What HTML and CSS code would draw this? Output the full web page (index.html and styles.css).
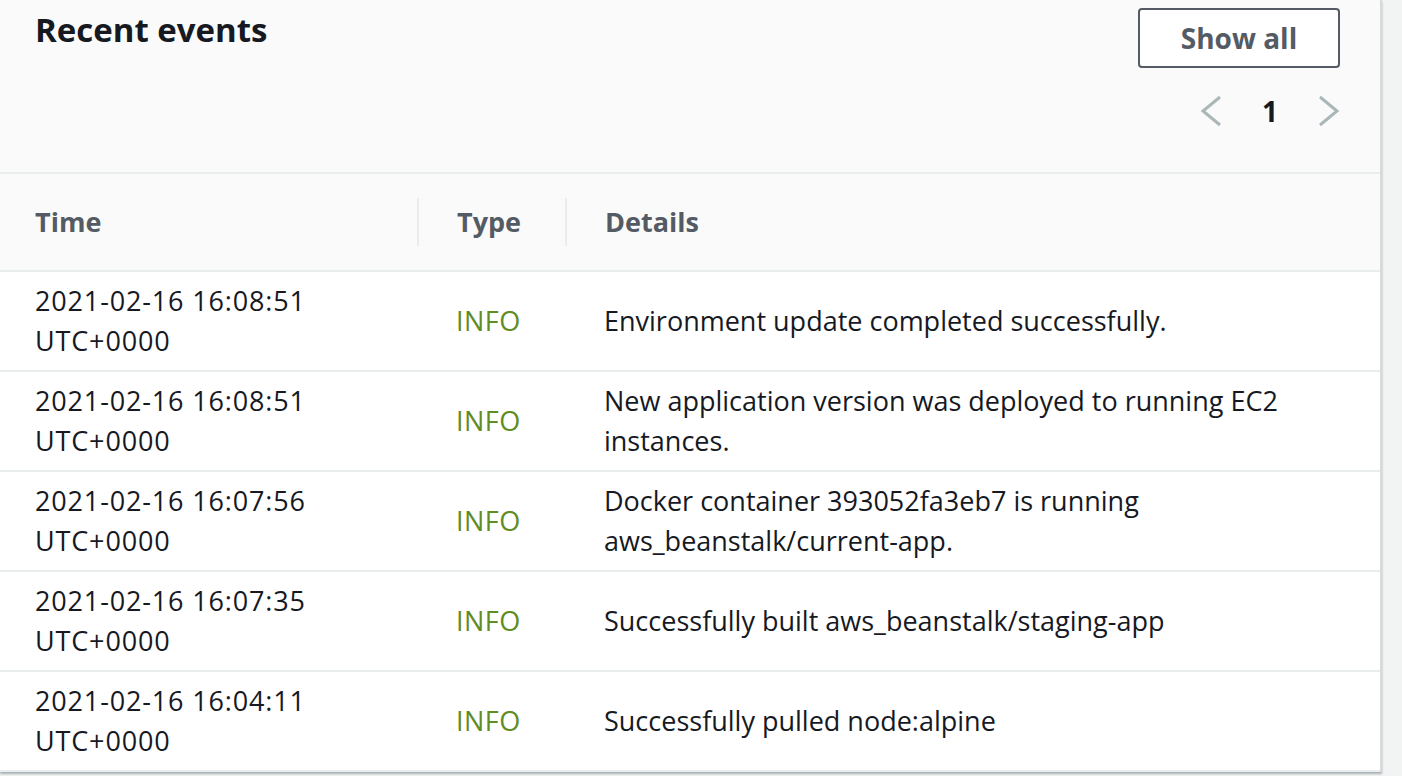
FILE: index.html
```html
<!DOCTYPE html>
<html>
<head>
<meta charset="utf-8">
<link rel="stylesheet" href="styles.css">
</head>
<body>
<div class="page">
  <section class="card">
    <header class="card-header">
      <h2 class="title">Recent events</h2>
      <div class="actions">
        <button class="btn">Show all</button>
        <nav class="pager">
          <span class="chev"><svg width="24" height="32" viewBox="0 0 24 32"><polyline points="21,2 4,16 21,30" fill="none" stroke="#aab7b8" stroke-width="3"/></svg></span>
          <span class="page-num">1</span>
          <span class="chev"><svg width="24" height="32" viewBox="0 0 24 32"><polyline points="3,2 20,16 3,30" fill="none" stroke="#aab7b8" stroke-width="3"/></svg></span>
        </nav>
      </div>
    </header>
    <table class="events">
      <thead>
        <tr>
          <th class="c-time"><span>Time</span></th>
          <th class="c-type"><span>Type</span></th>
          <th class="c-details"><span>Details</span></th>
        </tr>
      </thead>
      <tbody>
        <tr>
          <td class="c-time">2021-02-16 16:08:51<br>UTC+0000</td>
          <td class="c-type info">INFO</td>
          <td class="c-details">Environment update completed successfully.</td>
        </tr>
        <tr>
          <td class="c-time">2021-02-16 16:08:51<br>UTC+0000</td>
          <td class="c-type info">INFO</td>
          <td class="c-details">New application version was deployed to running EC2<br>instances.</td>
        </tr>
        <tr>
          <td class="c-time">2021-02-16 16:07:56<br>UTC+0000</td>
          <td class="c-type info">INFO</td>
          <td class="c-details">Docker container 393052fa3eb7 is running<br>aws_beanstalk/current-app.</td>
        </tr>
        <tr>
          <td class="c-time">2021-02-16 16:07:35<br>UTC+0000</td>
          <td class="c-type info">INFO</td>
          <td class="c-details">Successfully built aws_beanstalk/staging-app</td>
        </tr>
        <tr>
          <td class="c-time">2021-02-16 16:04:11<br>UTC+0000</td>
          <td class="c-type info">INFO</td>
          <td class="c-details">Successfully pulled node:alpine</td>
        </tr>
      </tbody>
    </table>
  </section>
</div>
</body>
</html>
```
FILE: styles.css
```css
* { box-sizing: border-box; }
html, body {
  margin: 0;
  padding: 0;
  background: #f2f3f3;
  font-family: "Open Sans", "Liberation Sans", sans-serif;
  color: #16191f;
}
.page {
  width: 1402px;
  height: 776px;
  overflow: hidden;
}
.card {
  width: 1382px;
  background: #fff;
  border-right: 2px solid #d5dbdb;
  box-shadow: 0 2px 2px rgba(0, 28, 36, 0.3);
}
.card-header {
  height: 174px;
  background: #fafafa;
  border-bottom: 2px solid #eaeded;
  display: flex;
  justify-content: space-between;
  align-items: flex-start;
  padding: 0 40px 0 35px;
}
.title {
  margin: 10px 0 0;
  font-size: 33px;
  font-weight: 700;
  line-height: 40px;
}
.actions {
  display: flex;
  flex-direction: column;
  align-items: flex-end;
  padding-top: 8px;
}
.btn {
  width: 202px;
  height: 60px;
  background: #fff;
  border: 2px solid #545b64;
  border-radius: 4px;
  color: #545b64;
  font-family: inherit;
  font-size: 28px;
  font-weight: 700;
  padding: 0;
  cursor: pointer;
}
.pager {
  display: flex;
  align-items: center;
  gap: 39px;
  margin-top: 27px;
  margin-right: -1px;
  height: 32px;
}
.chev { display: flex; }
.page-num {
  font-size: 28px;
  font-weight: 700;
  color: #16191f;
}
.events {
  width: 100%;
  border-collapse: collapse;
  font-size: 27px;
}
.events thead th {
  height: 97px;
  background: #fafafa;
  border-bottom: 2px solid #eaeded;
  text-align: left;
  font-weight: 700;
  color: #545b64;
  padding: 0;
  vertical-align: middle;
}
.events th span {
  display: block;
  padding-left: 38px;
  line-height: 48px;
}
.events th.c-time span { padding-left: 35px; }
.events th.c-type span,
.events th.c-details span {
  border-left: 2px solid #eaeded;
}
.c-time { width: 417px; }
.c-type { width: 148px; }
.events td {
  height: 100px;
  border-bottom: 2px solid #eaeded;
  padding: 0 0 0 39px;
  line-height: 40px;
  vertical-align: middle;
}
.events td.c-time {
  padding-left: 35px;
  letter-spacing: 0.85px;
}
.events td.c-type {
  padding-left: 39px;
  letter-spacing: 0.5px;
}
.info { color: #5f8c23; }
```
